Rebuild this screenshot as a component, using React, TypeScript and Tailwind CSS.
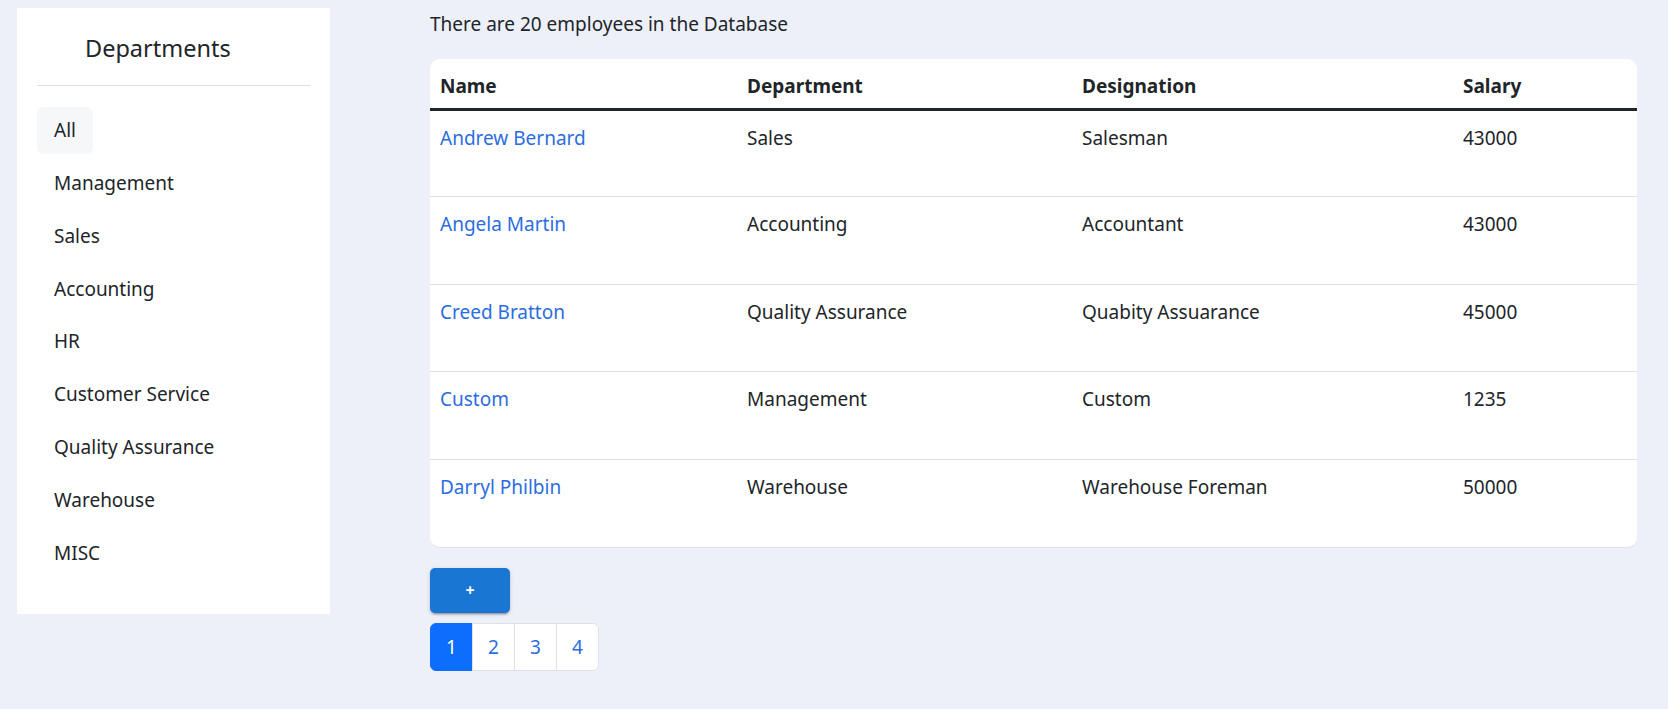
import React from 'react'

const departments = [
  'All',
  'Management',
  'Sales',
  'Accounting',
  'HR',
  'Customer Service',
  'Quality Assurance',
  'Warehouse',
  'MISC',
]

const employees = [
  { name: 'Andrew Bernard', dept: 'Sales', role: 'Salesman', salary: '43000' },
  { name: 'Angela Martin', dept: 'Accounting', role: 'Accountant', salary: '43000' },
  { name: 'Creed Bratton', dept: 'Quality Assurance', role: 'Quabity Assuarance', salary: '45000' },
  { name: 'Custom', dept: 'Management', role: 'Custom', salary: '1235' },
  { name: 'Darryl Philbin', dept: 'Warehouse', role: 'Warehouse Foreman', salary: '50000' },
]

function Sidebar() {
  return (
    <aside className="ml-[17px] mt-[8px] w-[313px] h-[606px] bg-white px-[20px] shrink-0">
      <h5 className="pl-[48px] pt-[25px] pb-[22px] text-[23.5px] leading-[30px] text-[#212529] border-b border-[#dcdfe3]">
        Departments
      </h5>
      <ul className="mt-[21px] flex flex-col gap-[5.8px]">
        {departments.map((d, i) => (
          <li key={d}>
            <a
              href="#"
              className={`inline-flex items-center h-[47px] px-[17px] rounded-[6px] text-[19px] text-[#212529] ${
                i === 0 ? 'bg-[#f6f7f9]' : ''
              }`}
            >
              {d}
            </a>
          </li>
        ))}
      </ul>
    </aside>
  )
}

function EmployeeTable() {
  return (
    <div className="mt-[20px] w-[1207px] bg-white rounded-[10px] overflow-hidden border-b border-[#dfe2e6]">
      <table className="w-full table-fixed border-collapse text-[19px] text-[#212529]">
        <colgroup>
          <col className="w-[307px]" />
          <col className="w-[335px]" />
          <col className="w-[381px]" />
          <col />
        </colgroup>
        <thead>
          <tr className="h-[50px] border-b-[3px] border-[#212529]">
            <th className="text-left font-bold px-[10px] pt-[5px]">Name</th>
            <th className="text-left font-bold px-[10px] pt-[5px]">Department</th>
            <th className="text-left font-bold px-[10px] pt-[5px]">Designation</th>
            <th className="text-left font-bold px-[10px] pt-[5px]">Salary</th>
          </tr>
        </thead>
        <tbody>
          {employees.map((e, i) => (
            <tr
              key={e.name}
              className={`h-[87.6px] align-top ${i < employees.length - 1 ? 'border-b border-[#dee2e6]' : ''}`}
            >
              <td className="px-[10px] pt-[12px] leading-[30px]">
                <a href="#" className="text-[#2b6de0]">{e.name}</a>
              </td>
              <td className="px-[10px] pt-[12px] leading-[30px]">{e.dept}</td>
              <td className="px-[10px] pt-[12px] leading-[30px]">{e.role}</td>
              <td className="px-[10px] pt-[12px] leading-[30px]">{e.salary}</td>
            </tr>
          ))}
        </tbody>
      </table>
    </div>
  )
}

function Pagination() {
  return (
    <ul className="mt-[10px] flex w-fit text-[19px]">
      {[1, 2, 3, 4].map((n, i) => (
        <li key={n}>
          <a
            href="#"
            className={`flex items-center justify-center w-[43px] h-[48px] border ${
              n === 1
                ? 'bg-[#0d6efd] border-[#0d6efd] text-white rounded-l-[6px]'
                : 'bg-white border-[#dee2e6] text-[#2b6de0] -ml-px'
            } ${i === 3 ? 'rounded-r-[6px]' : ''}`}
          >
            {n}
          </a>
        </li>
      ))}
    </ul>
  )
}

export default function App() {
  return (
    <div
      className="min-h-[709px] bg-[#edf0f8] flex"
      style={{ fontFamily: '"Segoe UI", "Noto Sans", "Open Sans", sans-serif' }}
    >
      <Sidebar />
      <main className="ml-[100px] flex flex-col">
        <p className="mt-[9px] text-[19px] leading-[30px] text-[#212529]">
          There are 20 employees in the Database
        </p>
        <EmployeeTable />
        <button className="mt-[20px] w-[80px] h-[45px] rounded-[5px] bg-[#1976d2] text-white font-bold text-[16px] shadow-[0_3px_1px_-2px_rgba(0,0,0,0.2),0_2px_2px_0_rgba(0,0,0,0.14),0_1px_5px_0_rgba(0,0,0,0.12)]">
          +
        </button>
        <Pagination />
      </main>
    </div>
  )
}
